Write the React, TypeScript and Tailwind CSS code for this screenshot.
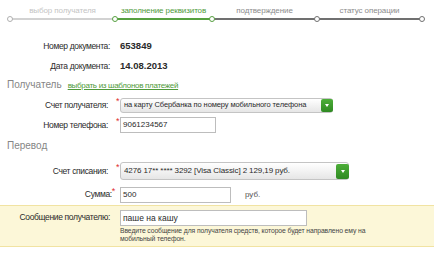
export default function App() {
  const steps = [
    { label: 'выбор получателя', w: 'w-[105px]', text: 'text-[#c4c4c4]', line: 'bg-[#d2d2d2]', dot: 'border-[#b0b0b0]' },
    { label: 'заполнение реквизитов', w: 'w-[97px]', text: 'text-[#4f9a3a]', line: 'bg-[#56a040]', dot: 'border-[#56a040]' },
    { label: 'подтверждение', w: 'w-[105px]', text: 'text-[#8c8c8c]', line: 'bg-[#707070]', dot: 'border-[#56a040]' },
    { label: 'статус операции', w: 'w-[105px]', text: 'text-[#8c8c8c]', line: 'bg-[#707070]', dot: 'border-[#707070]' },
  ]

  const font = { fontFamily: '"Liberation Sans", Arial, sans-serif' }

  const Star = () => <span className="text-[#e03030] text-[9px] relative -top-[3px]">*</span>

  const Arrow = () => (
    <span className="w-0 h-0 border-l-[2.5px] border-r-[2.5px] border-t-[3px] border-l-transparent border-r-transparent border-t-white" />
  )

  return (
    <div className="w-[434px] h-[260px] bg-white overflow-hidden text-[#2a2a2a]" style={font}>
      {/* progress */}
      <div className="flex pl-[10px] pt-[5px]">
        {steps.map((s, i) => (
          <div key={i} className={`${s.w} flex flex-col`}>
            <div className={`text-[8px] tracking-[-0.1px] text-center h-[12px] leading-[12px] ${s.text}`}>{s.label}</div>
            <div className="relative h-[6px] mt-[-1px]">
              <div className={`absolute left-0 right-0 top-[2px] h-[2px] ${s.line}`} />
              <div className={`absolute -left-[3px] top-0 w-[6px] h-[6px] rounded-full bg-white border ${s.dot}`} />
              {i === 3 && (
                <div className="absolute -right-[3px] top-0 w-[6px] h-[6px] rounded-full bg-white border border-[#707070]" />
              )}
            </div>
          </div>
        ))}
      </div>

      <div className="mt-[14px] text-[8.5px] tracking-[-0.35px]">
        <div className="flex items-center h-[20px]">
          <div className="w-[110px] text-right">Номер документа:</div>
          <div className="ml-[10px] font-bold text-[9.5px] tracking-normal">653849</div>
        </div>
        <div className="flex items-center h-[20px]">
          <div className="w-[110px] text-right">Дата документа:</div>
          <div className="ml-[10px] font-bold text-[9.5px] tracking-normal">14.08.2013</div>
        </div>

        <div className="flex items-baseline pl-[7px] h-[20px] pt-[1px]">
          <span className="text-[10px] tracking-normal text-[#858585]">Получатель</span>
          <span className="ml-[6px] text-[8px] tracking-[-0.3px] text-[#4f9a3a] underline">выбрать из шаблонов платежей</span>
        </div>

        <div className="flex items-center h-[18px]">
          <div className="w-[108px] text-right">Счет получателя:</div>
          <div className="w-[12px] pl-[8px]"><Star /></div>
          <div className="w-[213px] h-[15px] flex items-center border border-[#c4c4c4] rounded-[3px] bg-gradient-to-b from-white to-[#e6e6e6] text-[7.5px] tracking-[-0.1px] pl-[3px]">
            <span className="flex-1 whitespace-nowrap overflow-hidden">на карту Сбербанка по номеру мобильного телефона</span>
            <span className="w-[12px] h-[13px] mr-[-1px] bg-gradient-to-b from-[#4cae38] to-[#2f8a22] rounded-[2px] flex items-center justify-center">
              <Arrow />
            </span>
          </div>
        </div>

        <div className="flex items-center h-[20px] mt-[1px]">
          <div className="w-[108px] text-right">Номер телефона:</div>
          <div className="w-[12px] pl-[8px]"><Star /></div>
          <div className="w-[96px] h-[16px] border border-[#bdbdbd] text-[8px] tracking-normal pl-[2px] leading-[14px]">9061234567</div>
        </div>

        <div className="pl-[7px] h-[21px] leading-[21px] text-[10px] tracking-normal text-[#858585]">Перевод</div>

        <div className="flex items-center h-[22px] mt-[4px]">
          <div className="w-[108px] text-right">Счет списания:</div>
          <div className="w-[12px] pl-[8px]"><Star /></div>
          <div className="w-[229px] h-[18px] flex items-center border border-[#c4c4c4] rounded-[3px] bg-gradient-to-b from-white to-[#e6e6e6] text-[8px] tracking-[-0.1px] pl-[3px]">
            <span className="flex-1 whitespace-nowrap overflow-hidden">4276 17** **** 3292 [Visa Classic] 2 129,19 руб.</span>
            <span className="w-[13px] h-[15px] mr-[-1px] bg-gradient-to-b from-[#4cae38] to-[#2f8a22] rounded-[2px] flex items-center justify-center">
              <Arrow />
            </span>
          </div>
        </div>

        <div className="flex items-center h-[18px] mt-[4px]">
          <div className="w-[115px] text-right">Сумма:<Star /></div>
          <div className="ml-[5px] w-[111px] h-[16px] border border-[#bdbdbd] text-[8px] tracking-normal pl-[2px] leading-[14px]">500</div>
          <div className="ml-[14px] text-[8px] tracking-normal text-[#555]">руб.</div>
        </div>

        <div className="mt-[1px] bg-[#fcf7d8] border-y border-[#f1e3a2] pt-[3px] pb-[3px]">
          <div className="flex items-center h-[17px]">
            <div className="w-[110px] text-right">Сообщение получателю:</div>
            <div className="ml-[10px] w-[187px] h-[16px] bg-white border border-[#bdbdbd] text-[8.5px] tracking-normal pl-[2px] leading-[14px]">паше на кашу</div>
          </div>
          <div className="ml-[120px] mt-[1px] text-[6.8px] tracking-[-0.1px] leading-[8px] w-[260px] text-[#444]">
            Введите сообщение для получателя средств, которое будет направлено ему на мобильный телефон.
          </div>
        </div>
      </div>
    </div>
  )
}
